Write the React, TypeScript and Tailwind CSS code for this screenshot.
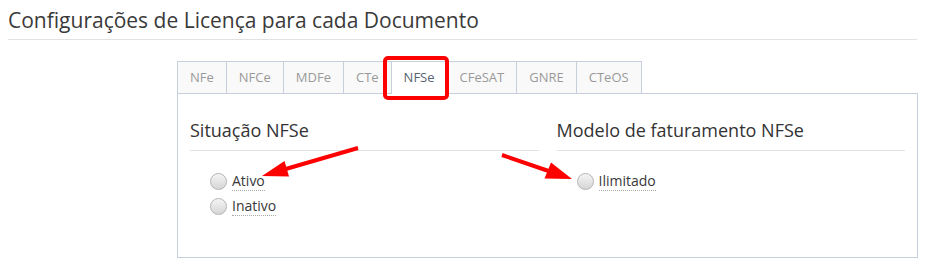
import { useState } from 'react'

const tabs = ['NFe', 'NFCe', 'MDFe', 'CTe', 'NFSe', 'CFeSAT', 'GNRE', 'CTeOS']

function Radio({ label, checked, onClick }: { label: string; checked: boolean; onClick: () => void }) {
  return (
    <label className="flex items-center gap-[5px] h-[25px] cursor-pointer" onClick={onClick}>
      <span className="w-[17px] h-[17px] rounded-full border border-[#b4b4b4] bg-gradient-to-b from-[#f4f4f4] to-[#d6d6d6] flex items-center justify-center">
        {checked && <span className="w-[7px] h-[7px] rounded-full bg-[#4a4a4a]" />}
      </span>
      <span className="text-[14px] leading-[18px] text-[#393939] border-b border-dotted border-[#aaa]">{label}</span>
    </label>
  )
}

export default function App() {
  const [active, setActive] = useState('NFSe')
  const [situacao, setSituacao] = useState<string | null>(null)
  const [modelo, setModelo] = useState<string | null>(null)

  return (
    <div className="relative w-[925px] h-[265px] bg-white font-['Open_Sans',sans-serif] overflow-hidden">
      {/* Page header */}
      <div className="mx-2 pt-[6px] pb-[5px] border-b border-[#e2e2e2]">
        <h1 className="text-[21px] leading-[28px] text-[#3a3a3a]">Configurações de Licença para cada Documento</h1>
      </div>

      <div className="ml-[177px] mt-[21px] w-[741px]">
        {/* Tabs */}
        <div className="flex items-start relative z-10">
          {tabs.map((t, i) => (
            <button
              key={t}
              onClick={() => setActive(t)}
              className={`px-3 border border-b-0 border-[#c5d0dc] text-[13px] ${i > 0 ? '-ml-px' : ''} ${
                active === t
                  ? 'h-[33px] bg-white text-[#576373] -mb-px'
                  : 'h-[32px] bg-[#f9f9f9] text-[#999]'
              }`}
            >
              {t}
            </button>
          ))}
        </div>

        {/* Panel */}
        <div className="border border-[#c5d0dc] h-[165px] px-3 pt-[24px]">
          <div className="grid grid-cols-2 gap-[18px]">
            <div>
              <h4 className="text-[18px] leading-[24px] text-[#333] pb-[8px] border-b border-[#e2e2e2]">Situação NFSe</h4>
              <div className="mt-[18px] pl-5 flex flex-col items-start">
                <Radio label="Ativo" checked={situacao === 'Ativo'} onClick={() => setSituacao('Ativo')} />
                <Radio label="Inativo" checked={situacao === 'Inativo'} onClick={() => setSituacao('Inativo')} />
              </div>
            </div>
            <div>
              <h4 className="text-[18px] leading-[24px] text-[#333] pb-[8px] border-b border-[#e2e2e2]">Modelo de faturamento NFSe</h4>
              <div className="mt-[18px] pl-5 flex flex-col items-start">
                <Radio label="Ilimitado" checked={modelo === 'Ilimitado'} onClick={() => setModelo('Ilimitado')} />
              </div>
            </div>
          </div>
        </div>
      </div>

      {/* Annotation overlay */}
      <svg className="absolute inset-0 pointer-events-none z-20" width="925" height="265" viewBox="0 0 925 265">
        <rect x="385" y="58" width="62" height="40" rx="3" fill="none" stroke="#ff0000" strokeWidth="4" />
        <line x1="358" y1="148" x2="284" y2="169.5" stroke="#ff0000" strokeWidth="4" />
        <polygon points="262,176 289,176.5 284.5,161" fill="#ff0000" />
        <line x1="502" y1="155" x2="550" y2="171.5" stroke="#ff0000" strokeWidth="4" />
        <polygon points="572,179 544.5,178.5 551,162.5" fill="#ff0000" />
      </svg>
    </div>
  )
}
